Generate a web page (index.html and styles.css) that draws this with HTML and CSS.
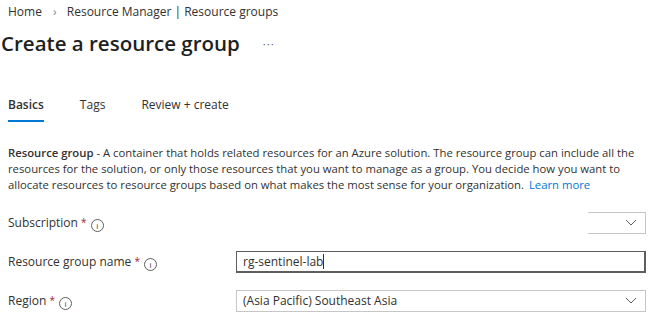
FILE: index.html
```html
<!DOCTYPE html>
<html lang="en">
<head>
    <meta charset="UTF-8">
    <meta name="viewport" content="width=device-width, initial-scale=1.0">
    <title>Create a resource group</title>
    <link rel="stylesheet" href="styles.css">
</head>
<body>

    <div class="breadcrumb">
        <a href="#home">Home</a>
        <span class="sep">&#8250;</span>
        <a href="#rg">Resource Manager | Resource groups</a>
    </div>

    <div class="page-title">
        <h1>Create a resource group</h1>
        <span class="more">&middot;&middot;&middot;</span>
    </div>

    <!-- Tabs -->
    <div class="tabs">
        <a href="#basics" class="tab active">Basics</a>
        <a href="#tags" class="tab">Tags</a>
        <a href="#review" class="tab">Review + create</a>
    </div>

    <p class="intro">
        <b>Resource group</b> - A container that holds related resources for an Azure solution. The resource group can include all the resources for the solution, or only those resources that you want to manage as a group. You decide how you want to allocate resources to resource groups based on what makes the most sense for your organization. <a href="#learn">Learn more</a>
    </p>

    <div class="form">
        <div class="row">
            <label>Subscription <span class="req">*</span> <span class="info">i</span></label>
            <div class="field">
                <div class="select select-cut">
                    <span></span>
                    <svg class="chev" width="12" height="7" viewBox="0 0 12 7"><path d="M1 1l5 5 5-5" fill="none" stroke="#605e5c" stroke-width="1"/></svg>
                </div>
            </div>
        </div>
        <div class="row">
            <label>Resource group name <span class="req">*</span> <span class="info">i</span></label>
            <div class="field">
                <div class="input focused">rg-sentinel-lab<span class="caret"></span></div>
            </div>
        </div>
        <div class="row">
            <label>Region <span class="req">*</span> <span class="info">i</span></label>
            <div class="field">
                <div class="select">
                    <span>(Asia Pacific) Southeast Asia</span>
                    <svg class="chev" width="12" height="7" viewBox="0 0 12 7"><path d="M1 1l5 5 5-5" fill="none" stroke="#605e5c" stroke-width="1"/></svg>
                </div>
            </div>
        </div>
    </div>

</body>
</html>
```

FILE: styles.css
```css
body {
    font-family: "Open Sans", Arial, sans-serif;
    margin: 0;
    padding: 0;
    background-color: #fff;
    color: #323130;
    font-size: 12px;
}

.breadcrumb {
    padding: 3px 8px 0 8px;
    height: 18px;
    font-size: 12px;
    color: #605e5c;
}
.breadcrumb a {
    color: #323130;
    text-decoration: none;
}
.breadcrumb .sep {
    margin: 0 7px 0 8px;
    color: #8a8886;
}

.page-title {
    display: flex;
    align-items: center;
    padding: 7px 2px 0 1px;
    height: 30px;
}
.page-title h1 {
    margin: 0;
    font-size: 20.5px;
    font-weight: 600;
    color: #201f1e;
}
.page-title .more {
    margin-left: 23px;
    color: #605e5c;
    font-size: 11px;
    letter-spacing: 1px;
}

.tabs {
    display: flex;
    gap: 36px;
    margin-top: 38px;
    padding: 0 8px;
}
.tabs .tab {
    color: #323130;
    text-decoration: none;
    font-size: 12px;
    padding-bottom: 7px;
    border-bottom: 2px solid transparent;
}
.tabs .tab.active {
    font-weight: 600;
    border-bottom-color: #0078d4;
}

.intro {
    margin: 23px 0 0 0;
    padding: 0 8px;
    line-height: 16px;
    width: 636px;
    font-size: 11.3px;
}
.intro b {
    font-weight: 600;
}
.intro a {
    color: #0078d4;
    text-decoration: none;
    margin-left: 2px;
}

.form {
    margin-top: 10px;
    padding: 0 11px 0 8px;
}
.row {
    display: flex;
    align-items: center;
    height: 39px;
}
.row label {
    width: 228px;
    flex-shrink: 0;
}
.req {
    color: #a4262c;
    font-size: 10px;
    vertical-align: 1px;
}
.info {
    display: inline-block;
    width: 11px;
    height: 11px;
    border: 1px solid #605e5c;
    border-radius: 50%;
    font-size: 8px;
    line-height: 11px;
    text-align: center;
    margin-left: 1px;
    vertical-align: -2px;
}
.field {
    flex: 1;
}
.select, .input {
    height: 22px;
    box-sizing: border-box;
    border: 1px solid #8a8886;
    display: flex;
    align-items: center;
    padding: 0 8px 0 6px;
}
.select {
    justify-content: space-between;
    border-color: #c8c6c4;
}
.select-cut {
    margin-left: 352px;
    border-left: none;
}
.input.focused {
    border-color: #605e5c;
    border-width: 1px 2px 2px 1px;
}
.caret {
    display: inline-block;
    width: 1px;
    height: 15px;
    background: #323130;
}
```
